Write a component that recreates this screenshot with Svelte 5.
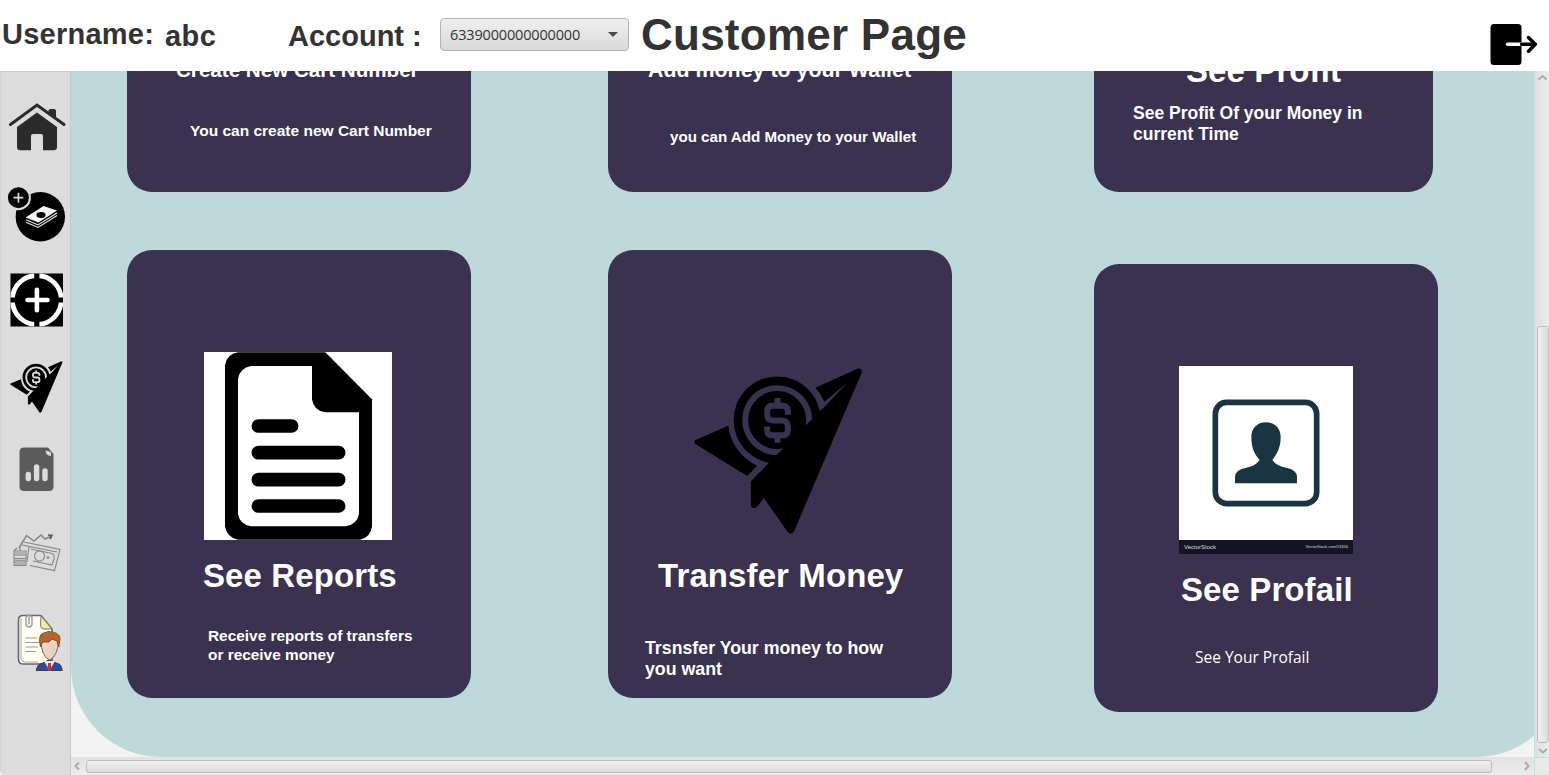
<script>
  const accounts = ['6339000000000000'];
  const account = accounts[0];
</script>

{#snippet plane(gap)}
  <svg class="plane" viewBox="40 36 508 502" aria-hidden="true">
    <circle cx="290" cy="194" r="131" />
    <circle cx="290" cy="194" r="96" fill="none" stroke={gap} stroke-width="18" />
    <path d="M543 54 341 528Q331 543 321 530L250 428 230 454Q218 464 211 452V378L500 83 432 140Q422 115 405 97L533 39Q547 38 543 54Z" />
    <path d="M498 84 432 140 424 163Z" fill={gap} />
    <path d="M44 254 143 211A150 150 0 0 0 230 331L200 362 44 266Q37 260 44 254Z" />
    <path d="M322 178V168Q322 151 305 151H276Q260 151 260 168V177Q260 193 276 195H305Q322 196 322 213V226Q322 240 305 240H276Q260 240 260 226V213M291 128V151M291 240V262" fill="none" stroke={gap} stroke-width="18" />
  </svg>
{/snippet}

<div class="app">
  <header>
    <span class="label user">Username:</span>
    <span class="label name">abc</span>
    <span class="label acc">Account :</span>
    <button class="combo"><span>{account}</span><i></i></button>
    <h1>Customer Page</h1>
    <svg class="logout" viewBox="1490 23 48 43" width="48" height="43">
      <rect x="1490.5" y="24" width="31" height="41" rx="3.5" />
      <path d="M1507.500 44.300H1521.500" stroke="#fff" stroke-width="3.400" stroke-linecap="round" />
      <path d="M1521.500 44.300H1535M1528.500 37.500 1535.300 44.300 1528.500 51.200" fill="none" stroke="#000" stroke-width="3.400" stroke-linecap="round" stroke-linejoin="round" />
    </svg>
  </header>

  <div class="body">
    <nav>
      <svg viewBox="0 95 70 75" width="70" height="75">
        <g fill="#2b2b2b">
          <path d="M48.500 110.500Q49 109 50.500 109H54Q56 109 56 111V119L48.500 113Z" />
          <path d="M17 127 37 112.500 57 127V147Q57 150.300 53.500 150.300H43V136Q43 134 41 134H33Q31 134 31 136V150.300H20.500Q17 150.300 17 147Z" />
        </g>
        <path d="M10.500 124.500 37 105 64 124.500" fill="none" stroke="#2b2b2b" stroke-width="3" stroke-linecap="round" />
      </svg>
      <svg viewBox="0 170 70 90" width="70" height="90">
        <circle cx="40.300" cy="216.800" r="24.700" />
        <circle cx="18.400" cy="197.700" r="11.500" stroke="#dcdcdc" stroke-width="2" />
        <path d="M13.500 197.700H23.300M18.400 192.800V202.600" stroke="#dcdcdc" stroke-width="1.700" />
        <path d="M25.500 217.500 43.500 206 57 210.500 38.500 222.500Z" fill="#f4f4f4" />
        <ellipse cx="41" cy="215" rx="4.600" ry="2.900" />
        <path d="M26 219.800 38 225 57 213M26 222.300 38 227.500 57 215.500" fill="none" stroke="#eee" stroke-width="1.100" />
      </svg>
      <svg viewBox="0 260 70 80" width="70" height="80">
        <rect x="10.500" y="273.500" width="52.500" height="53" />
        <svg x="10.500" y="273.500" width="52.500" height="53" viewBox="10.500 273.500 52.500 53">
          <circle cx="36.800" cy="300" r="24.500" fill="none" stroke="#fff" stroke-width="4.800" />
          <path d="M36.800 273V281M36.800 319V327M10 300H17.500M56 300H63.500" stroke="#000" stroke-width="5.200" />
        </svg>
        <path d="M27.500 300H47.500M36.900 289.800V310.200" stroke="#fff" stroke-width="4.600" stroke-linecap="round" />
      </svg>
      <div class="send">{@render plane('#dcdcdc')}</div>
      <svg viewBox="0 430 70 80" width="70" height="80">
        <path d="M24 447.500H48L53.500 454V486.500Q53.500 491 49 491H24Q19.500 491 19.500 486.500V452Q19.500 447.500 24 447.500Z" fill="#5c5c5c" />
        <path d="M45.500 450.500Q46 455.500 51 456L50.800 452Z" fill="#dcdcdc" />
        <path d="M28.300 474.500V478.500M36.600 467V478.500M45 471V478.500" stroke="#dcdcdc" stroke-width="5.400" stroke-linecap="round" />
      </svg>
      <svg viewBox="0 510 70 85" width="70" height="85" fill="none" stroke="#777" stroke-width="1.100" opacity=".85">
        <path d="M19 548 26.500 535.500 34 541 41 535 45 539 51.500 536" stroke-width="1.500" />
        <path d="M48 535 52 535.500 50 539" stroke="#444" stroke-width="1.600" />
        <path d="M24 542 60 549.500 54.500 570.500 30 565.500M22 545 57 552M29 547 27 562M31 549 52 553.500Q55 555 54 559L52 565 33 561" />
        <circle cx="39.500" cy="556" r="5" /><circle cx="48" cy="557.500" r=".8" />
        <path d="M14 551H26V565.500H14ZM14 555H26M14 558.500H26M14 562H26M17 548 14 551M20 546V551M15 553H25M15 560.300H25M15 564H25" />
      </svg>
      <svg viewBox="0 595 70 85" width="70" height="85">
        <path d="M23 615.500H41L52 629V664H23Q18.500 664 18.500 659V620Q18.500 615.500 23 615.500Z" fill="#fffff0" stroke="#667" stroke-width="1.600" />
        <path d="M21 618V659Q21 662 25 662H38" fill="none" stroke="#aaa" stroke-width="1" />
        <path d="M41 616 52 629H44Q40.500 629 40.500 625Z" fill="#f1eaa0" stroke="#777" />
        <path d="M26 617V625Q29 629 32 625V617Q29 613.500 26 617M29 617V624" fill="none" stroke="#999" stroke-width="1.400" />
        <path d="M25.500 638H37M25.500 642.500H39M25.500 647H38M25.500 651.500H36" stroke="#999" />
        <path d="M36.500 670.500Q37 664.500 43 663L49 660 56 663Q62 664.500 62 670.500Z" fill="#3147a0" stroke="#3d3d56" stroke-width="1.200" />
        <path d="M44 661 49.500 670.500 55 661Z" fill="#eee" /><path d="M48 663H51L51.500 670.500H47.500Z" fill="#c8303a" />
        <path d="M41 640Q41 656 49.500 660Q58 656 58.500 640L55 634H44Z" fill="#e8d3c5" stroke="#87614e" />
        <path d="M40.500 647Q37 632.500 46 632.500L48 631.500Q60 632 60 639L58.800 647 57 641 52 639 49 642 42.500 642Z" fill="#b9632c" stroke="#8b4b28" />
      </svg>
    </nav>

    <main>
      <div class="viewport">
        <div class="panel">
          <section class="col">
            <article class="card">
              <h2 class="create">Create New Cart Number</h2>
              <p class="p-create">You can create new Cart Number</p>
            </article>
            <article class="card">
              <svg class="doc" viewBox="43 37 564 564" width="188" height="188">
                <rect x="43" y="37" width="564" height="564" fill="#fff" />
                <path d="M145 38H407L547 179V560Q543 594 511 600H145Q112 595 106 560V77Q111 43 145 38Z" />
                <path d="M184 79H367V179Q372 214 407 218H508V523Q502 555 468 560H184Q150 554 145 523V117Q151 85 184 79Z" fill="#fff" />
                <path d="M206 259H306M206 339H447M206 420H447M206 499H447" stroke="#000" stroke-width="41" stroke-linecap="round" />
              </svg>
              <h2 class="reports">See Reports</h2>
              <p class="p-reports">Receive reports of transfers<br />or receive money</p>
            </article>
          </section>

          <section class="col">
            <article class="card">
              <h2 class="add">Add money to your Wallet</h2>
              <p class="p-add">you can Add Money to your Wallet</p>
            </article>
            <article class="card">
              <div class="big">{@render plane('#3a3250')}</div>
              <h2 class="transfer">Transfer Money</h2>
              <p class="p-transfer">Trsnsfer Your money to how<br />you want</p>
            </article>
          </section>

          <section class="col last">
            <article class="card narrow">
              <h2 class="profit">See Profit</h2>
              <p class="p-profit">See Profit Of your Money in<br />current Time</p>
            </article>
            <article class="card">
              <div class="photo">
                <svg viewBox="43 34 522 522" width="174" height="174">
                  <rect x="43" y="34" width="522" height="522" fill="#fff" />
                  <rect x="152" y="143" width="304" height="304" rx="34" fill="none" stroke="#1a3542" stroke-width="17" />
                  <path d="M304 203C331 203 348 222 348 246C348 278 338 296 323 316Q334 333 364 339Q397 345 397 367V386H211V367Q212 344 245 339Q274 333 285 316C268 296 260 278 260 246C260 222 277 203 304 203Z" fill="#1a3542" />
                </svg>
                <div class="credit"><b>VectorStock</b><span>VectorStock.com/13356</span></div>
              </div>
              <h2 class="profail">See Profail</h2>
              <p class="p-profail">See Your Profail</p>
            </article>
          </section>
        </div>
      </div>
      <div class="vbar">
        <svg viewBox="0 0 14 14" width="14" height="14"><path d="M3.500 8.500 7.500 5 11.500 8.500" /></svg>
        <div class="vthumb"></div>
        <svg viewBox="0 0 14 14" width="14" height="14"><path d="M4 6 8 9.500 12 6" /></svg>
      </div>
      <div class="hbar">
        <svg viewBox="0 0 15 18" width="15" height="18"><path d="M8 5.500 4.500 9 8 12.500" /></svg>
        <div class="hthumb"></div>
        <svg class="right" viewBox="0 0 15 18" width="15" height="18"><path d="M6 5 9.500 9 6 13" /></svg>
      </div>
      <div class="corner"></div>
    </main>
  </div>
</div>

<style>
  :global(body) { margin: 0; background: #fff; overflow: hidden; }
  .app {
    width: 1549px; height: 775px; display: flex; flex-direction: column; overflow: hidden;
    font-family: "Liberation Sans", Arial, sans-serif; color: #333;
  }
  header { height: 71px; flex: none; display: flex; align-items: flex-start; background: #fff; }
  .label { font-weight: 700; font-size: 29px; line-height: 32px; white-space: nowrap; flex: none; }
  .user { width: 162px; padding: 18px 0 0 2px; box-sizing: border-box; letter-spacing: .25px; }
  .name { width: 125px; padding: 20px 0 0 3px; box-sizing: border-box; letter-spacing: .4px; }
  .acc { width: 153px; padding: 20px 0 0 1px; box-sizing: border-box; }
  .combo {
    width: 189px; height: 33px; margin: 18px 0 0; padding: 0 10px 0 9px; box-sizing: border-box; flex: none;
    display: flex; align-items: center; justify-content: space-between;
    border: 1.500px solid #b4b4b4; border-radius: 4px; background: linear-gradient(#efefef, #d9d9d9);
    font: 14.500px/20px "Open Sans", sans-serif; letter-spacing: -.16px; color: #333;
  }
  .combo i { border: 5px solid transparent; border-top: 5px solid #4a4a4a; border-bottom: 0; }
  h1 { margin: 10px 0 0 12px; font-size: 44px; line-height: 50px; letter-spacing: .25px; white-space: nowrap; }
  .logout { margin: 23px 11px 0 auto; flex: none; }

  .body { flex: 1; display: flex; min-height: 0; }
  nav {
    width: 71px; box-sizing: border-box; padding-top: 23px; flex: none; display: flex; flex-direction: column;
    background: #dcdcdc; border: solid #c8c8c8; border-width: 1px 1px 0 0;
    border-bottom-left-radius: 5px; box-shadow: inset 1px 0 #d3d3d3;
  }
  nav svg { flex: none; display: block; }
  .send { height: 90px; box-sizing: border-box; padding: 21px 0 0 10px; }
  .send .plane { width: 53px; height: 52px; }

  main { flex: 1; display: grid; grid-template: 686px 18px / 1463px 15px; background: #e6e6e6; }
  .viewport { overflow: hidden; background: #f3f3f3; }
  .panel {
    width: 1495px; height: 1013px; margin-top: -327px; box-sizing: border-box; padding-left: 56px;
    display: flex; align-items: flex-start; background: #bed9da; border-radius: 0 0 90px 90px;
  }
  .col { width: 481px; flex: none; display: flex; flex-direction: column; gap: 58px; }
  .col:nth-child(2) { width: 486px; }
  .col.last { width: 345px; gap: 72px; }
  .card {
    width: 344px; height: 448px; box-sizing: border-box; border-radius: 25px; background: #3a3250; color: #fff;
    display: flex; flex-direction: column; align-items: flex-start; white-space: nowrap;
  }
  .card.narrow { width: 339px; }
  h2, p { margin: 0; font-weight: 700; flex: none; }
  h2 { font-size: 33px; line-height: 38px; letter-spacing: .1px; }
  .create { font-size: 20.600px; line-height: 24px; letter-spacing: 0; margin: 314px 0 0 49px; }
  .p-create { font-size: 15.500px; line-height: 19px; margin: 39px 0 0 63px; }
  .add { font-size: 21.400px; line-height: 24px; letter-spacing: 0; margin: 314px 0 0 40px; }
  .p-add { font-size: 15.150px; line-height: 19px; margin: 45px 0 0 62px; }
  .profit { margin: 308px 0 0 92px; }
  .p-profit { font-size: 17.500px; line-height: 21px; margin: 13px 0 0 39px; }
  .doc { margin: 102px 0 0 77px; flex: none; }
  .reports { margin: 17px 0 0 76px; }
  .p-reports { font-size: 15.400px; line-height: 19px; margin: 31px 0 0 81px; }
  .big { margin: 117px 0 0 86px; height: 168px; }
  .big .plane { width: 169px; height: 168px; }
  .plane { display: block; }
  .transfer { margin: 22px 0 0 50px; }
  .p-transfer { font-size: 17.750px; line-height: 21px; margin: 43px 0 0 37px; }
  .photo { margin: 102px 0 0 85px; width: 174px; height: 188px; display: flex; flex-direction: column; }
  .photo svg { display: block; }
  .credit {
    height: 14px; padding: 0 5px; background: #131426; display: flex; align-items: center; justify-content: space-between;
    color: #ddd; font-size: 6px; line-height: 8px;
  }
  .credit b { font-weight: 400; }
  .credit span { font-size: 4px; }
  .profail { margin: 17px 0 0 87px; }
  .p-profail { font: 15.500px/20px "Open Sans", sans-serif; letter-spacing: 0; margin: 38px 0 0 101px; }

  .vbar { box-sizing: border-box; border-left: 1px solid #b9e5e2; display: flex; flex-direction: column; background: linear-gradient(90deg, #e0e0e0, #ececec); }
  .hbar { display: flex; align-items: flex-start; background: linear-gradient(#e2e2e2, #ececec); }
  .vbar svg, .hbar svg { flex: none; fill: none; stroke: #aaa; stroke-width: 2; }
  .vthumb { width: 12px; height: 418px; margin: 241px 0 0 2px; box-sizing: border-box; border: 1px solid #bdbdbd; border-radius: 3px; background: linear-gradient(90deg, #f0f0f0, #dcdcdc); }
  .hthumb { width: 1406px; height: 13px; margin-top: 3px; box-sizing: border-box; border: 1px solid #bdbdbd; border-radius: 3px; background: linear-gradient(#f0f0f0, #dcdcdc); }
  .hbar .right { margin-left: auto; }
  .corner { background: #e9e9e9; border: solid #b9e5e2; border-width: 1px 0 0 1px; border-bottom-right-radius: 5px; }
</style>
